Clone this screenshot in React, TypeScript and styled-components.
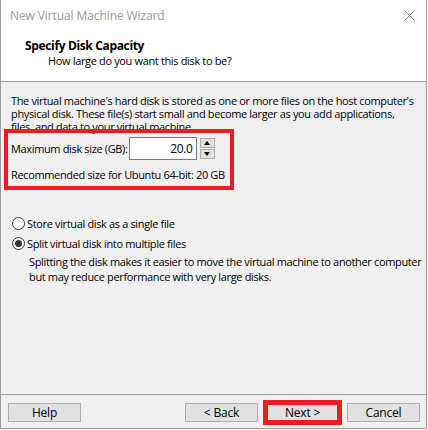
import React from 'react';
import styled, { createGlobalStyle } from 'styled-components';

const GlobalStyle = createGlobalStyle`
  html, body {
    margin: 0;
    padding: 0;
    background: #ffffff;
  }
  body {
    font-family: "Segoe UI", "Open Sans", "Noto Sans", sans-serif;
    font-size: 11px;
    color: #000;
  }
`;

const Window = styled.div`
  width: 427px;
  height: 429px;
  box-sizing: border-box;
  border: 1px solid #9b9b9b;
  border-top: none;
  display: flex;
  flex-direction: column;
  background: #f0f0f0;
  letter-spacing: -0.35px;
`;

const TitleBar = styled.div`
  height: 30px;
  flex: none;
  display: flex;
  align-items: center;
  justify-content: space-between;
  padding: 0 9px 0 9px;
  background: #fff;
  color: #9a9a9a;
  font-size: 12px;
  letter-spacing: -0.1px;
`;

const CloseIcon = styled.svg`
  width: 11px;
  height: 11px;
  margin-right: 2px;
`;

const Header = styled.div`
  height: 52px;
  flex: none;
  background: #fff;
  border-bottom: 1px solid #a0a0a0;
  padding: 8px 0 0 24px;
  box-sizing: border-box;
`;

const HeaderTitle = styled.div`
  font-weight: 700;
  font-size: 12px;
  line-height: 15px;
`;

const HeaderSub = styled.div`
  line-height: 15px;
  padding-left: 23px;
`;

const Body = styled.div`
  flex: 1;
  padding: 12px 10px 0 10px;
  display: flex;
  flex-direction: column;
`;

const Paragraph = styled.p`
  margin: 0;
  line-height: 13px;
  white-space: nowrap;
`;

const Highlight = styled.div`
  margin: -4px 0 0 -7px;
  width: 230px;
  box-sizing: border-box;
  border: 4px solid #ed1c24;
  padding: 4px 0 4px 3px;
`;

const SizeRow = styled.div`
  display: flex;
  align-items: center;
  height: 23px;
`;

const SizeInput = styled.div`
  margin-left: 1px;
  width: 68px;
  height: 23px;
  box-sizing: border-box;
  border: 1px solid #7a7a7a;
  background: #fff;
  display: flex;
  align-items: center;
  justify-content: flex-end;
  padding-right: 3px;
  font-size: 12px;
`;

const Spinner = styled.div`
  margin-left: 3px;
  display: flex;
  flex-direction: column;
  gap: 1px;
`;

const SpinButton = styled.div`
  width: 15px;
  height: 10px;
  box-sizing: border-box;
  border: 1px solid #adadad;
  background: #e1e1e1;
  display: flex;
  align-items: center;
  justify-content: center;
`;

const Arrow = styled.div<{ $up?: boolean }>`
  width: 0;
  height: 0;
  border-left: 3.5px solid transparent;
  border-right: 3.5px solid transparent;
  ${(p) => (p.$up ? 'border-bottom: 4px solid #000;' : 'border-top: 4px solid #000;')}
`;

const Recommended = styled.div`
  margin-top: 7px;
  line-height: 15px;
  white-space: nowrap;
`;

const RadioGroup = styled.div`
  margin-top: 23px;
  display: flex;
  flex-direction: column;
`;

const RadioRow = styled.label`
  display: flex;
  align-items: center;
  height: 20px;
  gap: 2px;
`;

const RadioCircle = styled.span<{ $checked?: boolean }>`
  width: 13px;
  height: 13px;
  box-sizing: border-box;
  border-radius: 50%;
  border: 1px solid #333;
  background: #fff;
  display: flex;
  align-items: center;
  justify-content: center;
  margin-left: 1px;

  &::after {
    content: '';
    width: 7px;
    height: 7px;
    border-radius: 50%;
    background: ${(p) => (p.$checked ? '#333' : 'transparent')};
  }
`;

const RadioNote = styled.p`
  margin: 1px 0 0 18px;
  line-height: 15px;
  white-space: nowrap;
`;

const Footer = styled.div`
  flex: none;
  height: 34px;
  border-top: 1px solid #a0a0a0;
  box-sizing: border-box;
  display: flex;
  align-items: flex-start;
  padding: 8px 6px 0 7px;
  gap: 8px;
`;

const Spacer = styled.div`
  flex: 1;
`;

const Button = styled.button<{ $marked?: boolean }>`
  width: 73px;
  height: 19px;
  padding: 0;
  box-sizing: border-box;
  border: 1px solid #adadad;
  background: #e1e1e1;
  font: inherit;
  font-size: 12px;
  letter-spacing: -0.2px;
  color: #000;
  line-height: 16px;
  ${(p) => (p.$marked ? 'outline: 5px solid #ed1c24; outline-offset: -2px;' : '')}
`;

const App: React.FC = () => {
  return (
    <>
      <GlobalStyle />
      <Window>
        <TitleBar>
          <span>New Virtual Machine Wizard</span>
          <CloseIcon viewBox="0 0 11 11">
            <path d="M0.5 0.5 L10.5 10.5 M10.5 0.5 L0.5 10.5" stroke="#8a8a8a" strokeWidth="1" fill="none" />
          </CloseIcon>
        </TitleBar>
        <Header>
          <HeaderTitle>Specify Disk Capacity</HeaderTitle>
          <HeaderSub>How large do you want this disk to be?</HeaderSub>
        </Header>
        <Body>
          <Paragraph>
            The virtual machine's hard disk is stored as one or more files on the host computer's
            <br />
            physical disk. These file(s) start small and become larger as you add applications,
            <br />
            files, and data to your virtual machine.
          </Paragraph>
          <Highlight>
            <SizeRow>
              <span>Maximum disk size (GB):</span>
              <SizeInput>20.0</SizeInput>
              <Spinner>
                <SpinButton>
                  <Arrow $up />
                </SpinButton>
                <SpinButton>
                  <Arrow />
                </SpinButton>
              </Spinner>
            </SizeRow>
            <Recommended>Recommended size for Ubuntu 64-bit: 20 GB</Recommended>
          </Highlight>
          <RadioGroup>
            <RadioRow>
              <RadioCircle />
              <span>Store virtual disk as a single file</span>
            </RadioRow>
            <RadioRow>
              <RadioCircle $checked />
              <span>Split virtual disk into multiple files</span>
            </RadioRow>
            <RadioNote>
              Splitting the disk makes it easier to move the virtual machine to another computer
              <br />
              but may reduce performance with very large disks.
            </RadioNote>
          </RadioGroup>
        </Body>
        <Footer>
          <Button>Help</Button>
          <Spacer />
          <Button>&lt; Back</Button>
          <Button $marked>Next &gt;</Button>
          <Button>Cancel</Button>
        </Footer>
      </Window>
    </>
  );
};

export default App;
